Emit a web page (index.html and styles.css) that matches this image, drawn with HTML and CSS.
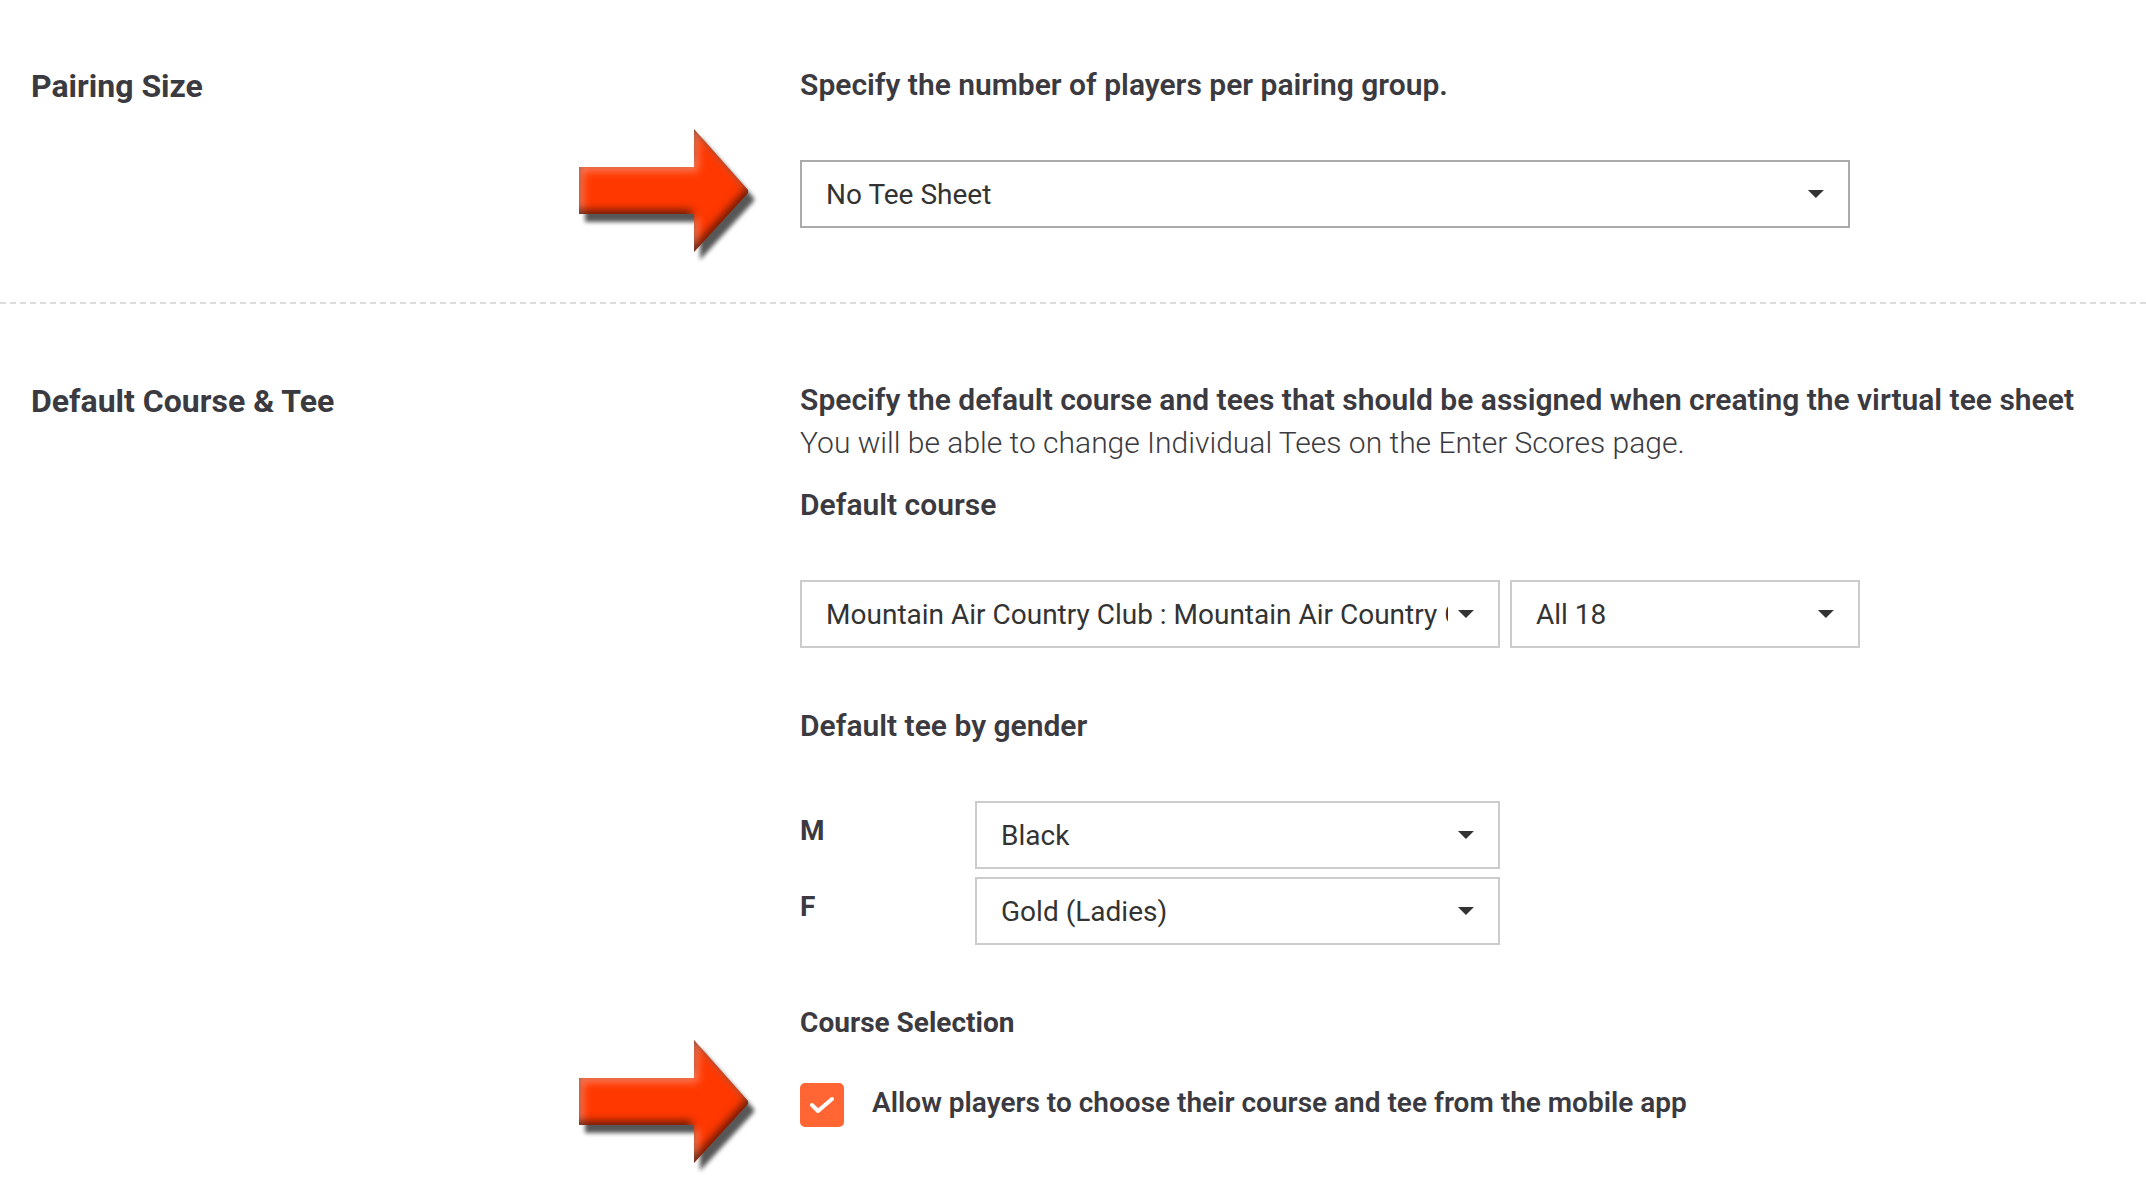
FILE: index.html
```html
<!DOCTYPE html>
<html lang="en">

<head>
    <meta charset="UTF-8">
    <meta name="viewport" content="width=device-width, initial-scale=1.0">
    <title>Pairing Settings</title>
    <link rel="stylesheet" href="styles.css">
</head>

<body>
    <!-- shared arrow drawing -->
    <svg class="defs" width="0" height="0" aria-hidden="true">
        <defs>
            <filter id="bevel" x="-10%" y="-10%" width="125%" height="130%" color-interpolation-filters="sRGB">
                <feGaussianBlur in="SourceAlpha" stdDeviation="4" result="soft" />
                <feOffset in="soft" dx="4" dy="4" result="lightArea" />
                <feFlood flood-color="#fff" flood-opacity=".38" />
                <feComposite in2="lightArea" operator="out" />
                <feComposite in2="SourceAlpha" operator="in" result="light" />
                <feOffset in="soft" dx="-2" dy="-4" result="darkArea" />
                <feFlood flood-color="#000" flood-opacity=".6" />
                <feComposite in2="darkArea" operator="out" />
                <feComposite in2="SourceAlpha" operator="in" result="dark" />
                <feGaussianBlur in="SourceAlpha" stdDeviation="2" />
                <feOffset dx="6" dy="8" result="shadowArea" />
                <feFlood flood-color="#000" flood-opacity=".66" />
                <feComposite in2="shadowArea" operator="in" result="shadow" />
                <feMerge>
                    <feMergeNode in="shadow" />
                    <feMergeNode in="SourceGraphic" />
                    <feMergeNode in="light" />
                    <feMergeNode in="dark" />
                </feMerge>
            </filter>
            <symbol id="arrow" viewBox="0 0 184 144">
                <path d="M4 45H119V7L173 68V71L119 130V92H4Z" fill="#ff3800" filter="url(#bevel)" />
            </symbol>
        </defs>
    </svg>

    <form id="settings">
        <section class="section">
            <h2 class="title">Pairing Size</h2>
            <div class="content">
                <label class="question" for="pairingSize">Specify the number of players per pairing group.</label>
                <div class="field wide pointed">
                    <svg class="arrow" aria-hidden="true"><use href="#arrow" /></svg>
                    <div class="dropdown active">
                        <select id="pairingSize">
                            <option>No Tee Sheet</option>
                        </select>
                    </div>
                </div>
            </div>
        </section>

        <section class="section">
            <h2 class="title">Default Course &amp; Tee</h2>
            <div class="content">
                <p class="question">Specify the default course and tees that should be assigned when creating the virtual tee sheet</p>
                <p class="note">You will be able to change Individual Tees on the Enter Scores page.</p>

                <label class="question course-label" for="course">Default course</label>
                <div class="field course-row">
                    <div class="dropdown">
                        <select id="course">
                            <option>Mountain Air Country Club : Mountain Air Country Club</option>
                        </select>
                    </div>
                    <div class="dropdown">
                        <select id="holes" aria-label="Holes">
                            <option>All 18</option>
                        </select>
                    </div>
                </div>

                <h3 class="question group">Default tee by gender</h3>
                <div class="field tees">
                    <label class="gender" for="teeM">M</label>
                    <div class="dropdown">
                        <select id="teeM">
                            <option>Black</option>
                        </select>
                    </div>
                    <label class="gender" for="teeF">F</label>
                    <div class="dropdown">
                        <select id="teeF">
                            <option>Gold (Ladies)</option>
                        </select>
                    </div>
                </div>

                <h3 class="subtitle group">Course Selection</h3>
                <div class="allow pointed">
                    <svg class="arrow" aria-hidden="true"><use href="#arrow" /></svg>
                    <span class="check">
                        <input type="checkbox" id="allowChoice" checked>
                        <svg viewBox="0 0 44 44" aria-hidden="true">
                            <path d="M12 22L18 28L32 16" />
                        </svg>
                    </span>
                    <label for="allowChoice">Allow players to choose their course and tee from the mobile app</label>
                </div>
            </div>
        </section>
    </form>
</body>

</html>
```
FILE: styles.css
```css
* {
    box-sizing: border-box;
}

body {
    margin: 0;
    background: #fff;
    color: #3b3a40;
    font: 28px/43px Roboto, "Liberation Sans", sans-serif;
}

h2, h3, p {
    margin: 0;
}

.defs {
    position: absolute;
}

.section {
    display: grid;
    grid-template-columns: 4fr 7fr;
    padding: 63px 0 74px 31px;
}

.section + .section {
    border-top: 2px dashed #dcdcdc;
    padding-top: 74px;
}

.title {
    font-size: 32px;
    font-weight: 700;
    line-height: 46px;
}

.question {
    display: block;
    font-size: 30px;
    font-weight: 600;
}

.note {
    font-size: 30px;
    font-weight: 300;
}

.course-label {
    margin-top: 19px;
}

.group {
    margin-top: 56px;
}

.subtitle {
    font-size: 28px;
    font-weight: 700;
}

.field {
    margin-top: 54px;
}

.wide {
    width: 78%;
}

.course-row {
    display: grid;
    grid-template-columns: 52% 26%;
    gap: 10px;
}

.tees {
    display: grid;
    grid-template-columns: 13% 39%;
    row-gap: 8px;
}

.gender {
    padding-top: 8px;
    font-weight: 700;
}

/* dropdowns */
.dropdown {
    display: grid;
    align-items: center;
}

.dropdown select {
    grid-area: 1 / 1;
    width: 100%;
    height: 68px;
    padding: 0 50px 0 24px;
    border: 2px solid #ccc;
    border-radius: 0;
    background: #fff;
    color: #333;
    font: inherit;
    appearance: none;
}

.dropdown.active select {
    border-color: #aaa;
}

.dropdown::after {
    content: "";
    grid-area: 1 / 1;
    justify-self: end;
    width: 16px;
    height: 8px;
    margin-right: 26px;
    background: #333;
    clip-path: polygon(0 0, 100% 0, 50% 100%);
    pointer-events: none;
}

/* arrows that hang to the left of a field */
.pointed {
    position: relative;
}

.arrow {
    position: absolute;
    right: 100%;
    top: 50%;
    width: 184px;
    height: 144px;
    margin: -72px 41px 0 0;
}

/* checkbox */
.allow {
    display: flex;
    align-items: flex-start;
    gap: 28px;
    margin-top: 39px;
    font-weight: 600;
    line-height: 40px;
}

.check {
    display: grid;
    width: 44px;
    height: 44px;
}

.check input,
.check svg {
    grid-area: 1 / 1;
    width: 44px;
    height: 44px;
    margin: 0;
}

.check input {
    border-radius: 5px;
    border: 2px solid #ccc;
    appearance: none;
}

.check input:checked {
    border-color: #ff6633;
    background: #ff6633;
}

.check svg {
    fill: none;
    stroke: #fff;
    stroke-width: 4;
    stroke-linecap: round;
    stroke-linejoin: round;
    pointer-events: none;
}
```
